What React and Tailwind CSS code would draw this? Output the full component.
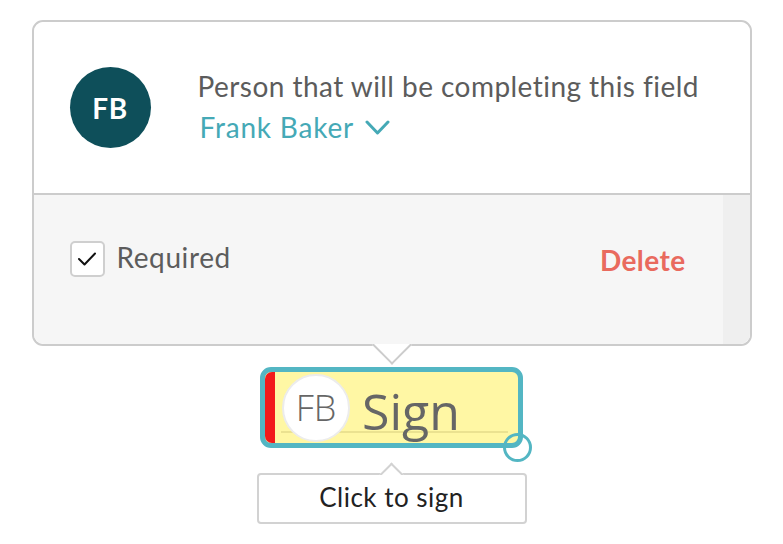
import React from "react";

const FONT = { fontFamily: "Lato, 'Open Sans', sans-serif" };

const Chevron = () => (
  <svg width="25" height="16" viewBox="0 0 25 16" fill="none" className="ml-[11px] mt-[2px]">
    <polyline points="2,2 12.5,13 23,2" stroke="#45a9b6" strokeWidth="3" strokeLinecap="round" strokeLinejoin="round" />
  </svg>
);

const SignerCard = () => {
  return (
    <div className="relative w-[720px] border-2 border-[#cccccc] rounded-[11px] bg-white">
      {/* signer */}
      <div className="h-[171px] flex items-center pl-[36px] rounded-t-[10px] bg-white">
        <div className="w-[81px] h-[81px] rounded-full bg-[#0e4f5a] flex items-center justify-center">
          <span className="text-white font-bold text-[28px] tracking-[0.5px]">FB</span>
        </div>
        <div className="ml-[47px] leading-[41px] text-[28px] -mt-[2px]">
          <div className="text-[#5c5c5c] tracking-[0.45px]">Person that will be completing this field</div>
          <div className="flex items-center text-[#45a9b6] tracking-[0.8px] pl-[2px]">
            Frank Baker
            <Chevron />
          </div>
        </div>
      </div>

      {/* options */}
      <div className="border-t-2 border-[#cccccc] flex h-[151px] rounded-b-[10px] bg-[#f6f6f6]">
        <div className="flex-1 flex items-start justify-between pt-[45px] pl-[36px] pr-[37px]">
          <label className="flex items-center">
            <span className="w-[35px] h-[36px] bg-white border-2 border-[#cfcfcf] rounded-[5px] flex items-center justify-center">
              <svg width="20" height="16" viewBox="0 0 20 16" fill="none">
                <polyline points="2,8 7.5,13.5 18,2.5" stroke="#111" strokeWidth="2" strokeLinecap="round" strokeLinejoin="round" />
              </svg>
            </span>
            <span className="ml-[12px] text-[28px] tracking-[0.6px] text-[#5c5c5c] -mt-[4px]">Required</span>
          </label>
          <button className="text-[28px] tracking-[0.4px] font-bold text-[#e96a5e] -mt-[1px]">Delete</button>
        </div>
        <div className="w-[27px] bg-[#efefef] rounded-br-[10px]" />
      </div>

      {/* pointer */}
      <div className="absolute left-1/2 -translate-x-1/2 top-full w-[46px] h-[24px] overflow-hidden">
        <div className="w-[28px] h-[28px] mx-auto -mt-[13px] bg-white border-r-2 border-b-2 border-[#cccccc] rotate-45" />
      </div>
    </div>
  );
};

const SignField = () => (
  <div className="relative mt-[21px] w-[263px] h-[81px] border-[5px] border-[#53b6c3] rounded-[11px] bg-[#fff7a4] flex items-stretch">
    <div className="absolute left-[16px] right-[10px] top-[59px] h-[2px] bg-[#ebe290]" />
    <div className="w-[10px] bg-[#f21a1a] rounded-l-[7px]" />
    <div className="relative flex items-center ml-[7px]">
      <div className="w-[68px] h-[68px] rounded-full bg-white border-2 border-[#ececec] flex items-center justify-center">
        <span className="text-[36px] font-light text-[#666]" style={{ fontFamily: "'Open Sans', sans-serif" }}>FB</span>
      </div>
      <span className="relative top-[3px] ml-[12px] text-[50px] text-[#666] leading-none" style={{ fontFamily: "'Open Sans', sans-serif" }}>Sign</span>
    </div>
    <div className="absolute right-[-14px] bottom-[-19px] w-[29px] h-[29px] rounded-full border-[3px] border-[#53b6c3]" />
  </div>
);

const Tooltip = () => (
  <div className="relative mt-[25px] w-[270px] h-[51px] border-2 border-[#d2d2d2] rounded-[4px] bg-white flex items-center justify-center">
    <div className="absolute left-1/2 -translate-x-1/2 -top-[14px] w-[30px] h-[14px] overflow-hidden">
      <div className="w-[17px] h-[17px] mx-auto mt-[5px] bg-white border-l-2 border-t-2 border-[#d2d2d2] rotate-45" />
    </div>
    <span className="text-[26px] tracking-[0.5px] text-[#222] -mt-[2px]">Click to sign</span>
  </div>
);

export default function App() {
  return (
    <div className="w-[783px] h-[544px] bg-white flex flex-col items-center pt-[20px] overflow-hidden" style={FONT}>
      <SignerCard />
      <SignField />
      <Tooltip />
    </div>
  );
}
